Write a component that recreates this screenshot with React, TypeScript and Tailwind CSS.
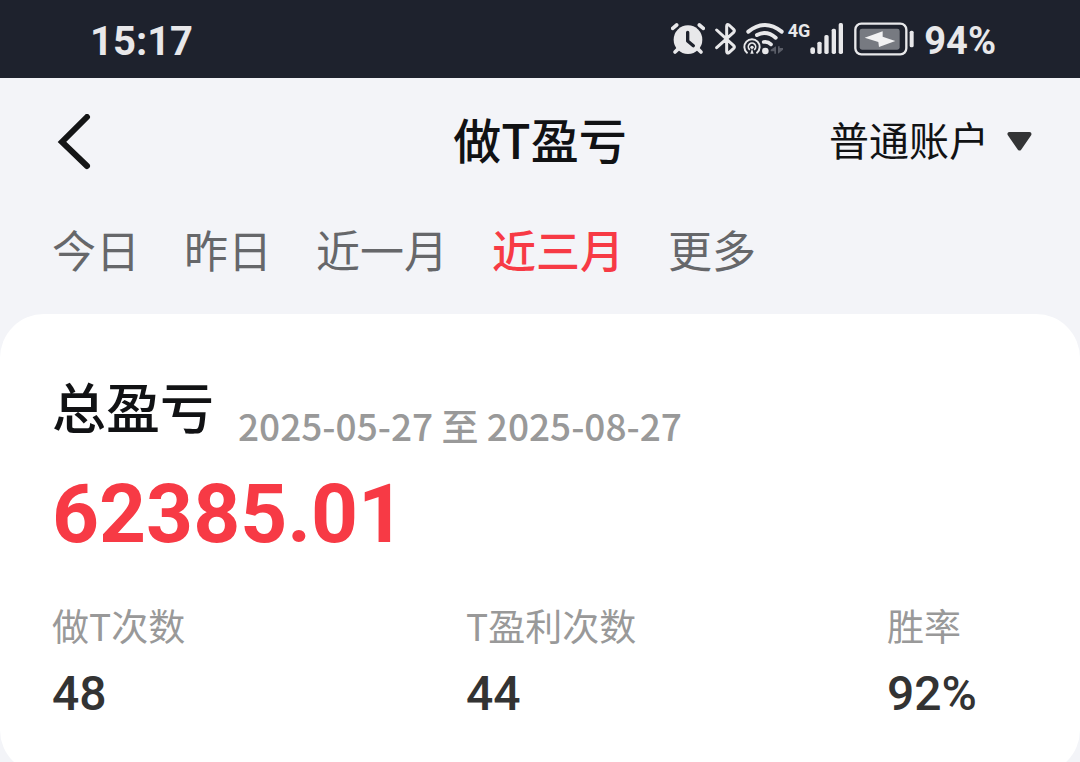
import { useState } from "react";

const tabs = ["今日", "昨日", "近一月", "近三月", "更多"];

const stats = [
  { label: "做T次数", value: "48" },
  { label: "T盈利次数", value: "44" },
  { label: "胜率", value: "92%" },
];

function AlarmIcon() {
  return (
    <svg width="34" height="34" viewBox="0 0 102 102" fill="none" aria-hidden="true">
      <circle cx="51" cy="53" r="43" fill="#e8e8ea" />
      <path d="M5 19 17 9M97 19 85 9" stroke="#e8e8ea" strokeWidth="11" strokeLinecap="round" />
      <path d="M20 82 12 90M82 82 90 90" stroke="#e8e8ea" strokeWidth="11" strokeLinecap="round" />
      <path d="M50 31V57L67 71" stroke="#1e222d" strokeWidth="10" strokeLinecap="round" strokeLinejoin="round" />
    </svg>
  );
}

function BluetoothIcon() {
  return (
    <svg width="22" height="34" viewBox="0 0 66 102" fill="none" aria-hidden="true">
      <path
        d="M5 24 56 71Q60 75 56 79L42 92Q35 96 35 88V13Q35 5 42 9L56 22Q60 26 56 31L5 77"
        stroke="#e8e8ea"
        strokeWidth="9"
        strokeLinecap="round"
        strokeLinejoin="round"
      />
    </svg>
  );
}

function WifiIcon() {
  return (
    <svg width="41" height="34" viewBox="0 0 123 102" fill="none" stroke="#e8e8ea" aria-hidden="true">
      <path d="M16 29Q66-11 116 29" strokeWidth="12" strokeLinecap="round" />
      <path d="M42 39Q71 24 98 47" strokeWidth="12" strokeLinecap="round" />
      <path d="M62 60Q75 58 84 67" strokeWidth="11" strokeLinecap="round" />
      <circle cx="67" cy="87" r="10" fill="#e8e8ea" stroke="none" />
      <path d="M12 92A23 23 0 1 1 42 92" strokeWidth="6" strokeLinecap="round" />
      <path d="M19 82A11 11 0 1 1 35 82" strokeWidth="5" strokeLinecap="round" />
      <circle cx="27" cy="76" r="5" fill="#e8e8ea" stroke="none" />
      <path d="M22 95 27 80 32 95Z" fill="#e8e8ea" stroke="none" />
      <path d="M99 73V95H94V88H83V83ZM105 95V73H110V78H120V83Z" fill="#5a5d67" stroke="none" />
    </svg>
  );
}

function SignalIcon() {
  return (
    <svg width="34" height="34" viewBox="0 0 102 102" fill="#e8e8ea" aria-hidden="true">
      <rect x="1" y="76" width="14" height="20" rx="6" />
      <rect x="22" y="59" width="13" height="37" rx="5" />
      <rect x="43" y="39" width="13" height="57" rx="5" />
      <rect x="65" y="20" width="13" height="76" rx="5" />
      <rect x="86" y="3" width="13" height="93" rx="5" />
    </svg>
  );
}

function BatteryIcon() {
  return (
    <svg width="60" height="34" viewBox="0 0 180 102" fill="none" aria-hidden="true">
      <rect x="4" y="5" width="153" height="92" rx="18" stroke="#e8e8ea" strokeWidth="7" />
      <rect x="17" y="20" width="120" height="63" rx="7" fill="#777a81" />
      <path d="M32 47 86 28V44L124 57 75 75 73 60Z" fill="#f2f2f3" />
      <rect x="167" y="26" width="12" height="50" rx="5" fill="#e8e8ea" />
    </svg>
  );
}

function StatusBar() {
  return (
    <div className="flex h-[78px] items-center justify-between bg-[#1e222d] pr-[84px] pl-[90px] font-[Roboto,sans-serif] font-bold text-[#e8e8ea]">
      <time className="pt-1.5 text-[40px] leading-10">15:17</time>
      <div className="flex items-center">
        <AlarmIcon />
        <span className="ml-2.5 flex">
          <BluetoothIcon />
        </span>
        <span className="ml-1.5 flex">
          <WifiIcon />
        </span>
        <span className="ml-1 self-start text-[18px] leading-7">4G</span>
        <SignalIcon />
        <span className="ml-2.5 flex">
          <BatteryIcon />
        </span>
        <span className="ml-2.5 pt-1 text-[38px] leading-10">94%</span>
      </div>
    </div>
  );
}

export default function App() {
  const [active, setActive] = useState("近三月");

  return (
    <div className="h-screen overflow-y-auto bg-[#f3f4f8] font-[Noto_Sans_CJK_SC,sans-serif] text-[#111214] [scrollbar-width:none]">
      <StatusBar />

      <header className="grid h-32 grid-cols-[1fr_auto_1fr] items-center px-12">
        <button type="button" aria-label="返回" className="justify-self-start px-2">
          <svg width="36" height="56" viewBox="0 0 36 56" fill="none" aria-hidden="true">
            <path d="M31 3 6 28 31 52" stroke="#141516" strokeWidth="6" strokeLinecap="round" />
          </svg>
        </button>
        <h1 className="pb-2 text-[48px] leading-[72px] font-medium">做T盈亏</h1>
        <label className="flex items-center gap-[18px] justify-self-end">
          <select
            aria-label="账户类型"
            className="appearance-none bg-transparent pb-1.5 text-[40px] leading-[60px] outline-none"
          >
            <option>普通账户</option>
          </select>
          <svg width="25" height="20" viewBox="0 0 25 20" aria-hidden="true">
            <path
              d="M2.500 2H22.500L12.500 16.500Z"
              fill="#333436"
              stroke="#333436"
              strokeWidth="4"
              strokeLinejoin="round"
            />
          </svg>
        </label>
      </header>

      <nav className="flex h-[108px] items-start gap-11 px-[52px] pt-2.5">
        {tabs.map((tab) => (
          <button
            key={tab}
            type="button"
            onClick={() => setActive(tab)}
            className={
              tab === active
                ? "text-[44px] leading-[66px] font-medium text-[#f73a45]"
                : "text-[44px] leading-[66px] text-[#66676a]"
            }
          >
            {tab}
          </button>
        ))}
      </nav>

      <main className="rounded-[44px] bg-white px-[52px] pt-[52px] pb-12">
        <div className="flex items-end gap-6">
          <h2 className="text-[54px] leading-[80px] font-medium">总盈亏</h2>
          <p className="text-[37px] leading-[42px] font-medium text-[#999999]">
            2025-05-27 至 2025-08-27
          </p>
        </div>
        <p className="mt-3 font-[Roboto,sans-serif] text-[82px] leading-[112px] font-bold text-[#f73a45]">
          62385.01
        </p>
        <dl className="mt-7 grid grid-cols-[414fr_421fr_141fr]">
          {stats.map((stat) => (
            <div key={stat.label} className="whitespace-nowrap">
              <dt className="text-[37px] leading-[54px] text-[#999999]">{stat.label}</dt>
              <dd className="mt-2.5 font-[Roboto,sans-serif] text-[48px] leading-[64px] font-medium text-[#333333]">
                {stat.value}
              </dd>
            </div>
          ))}
        </dl>
      </main>
    </div>
  );
}
